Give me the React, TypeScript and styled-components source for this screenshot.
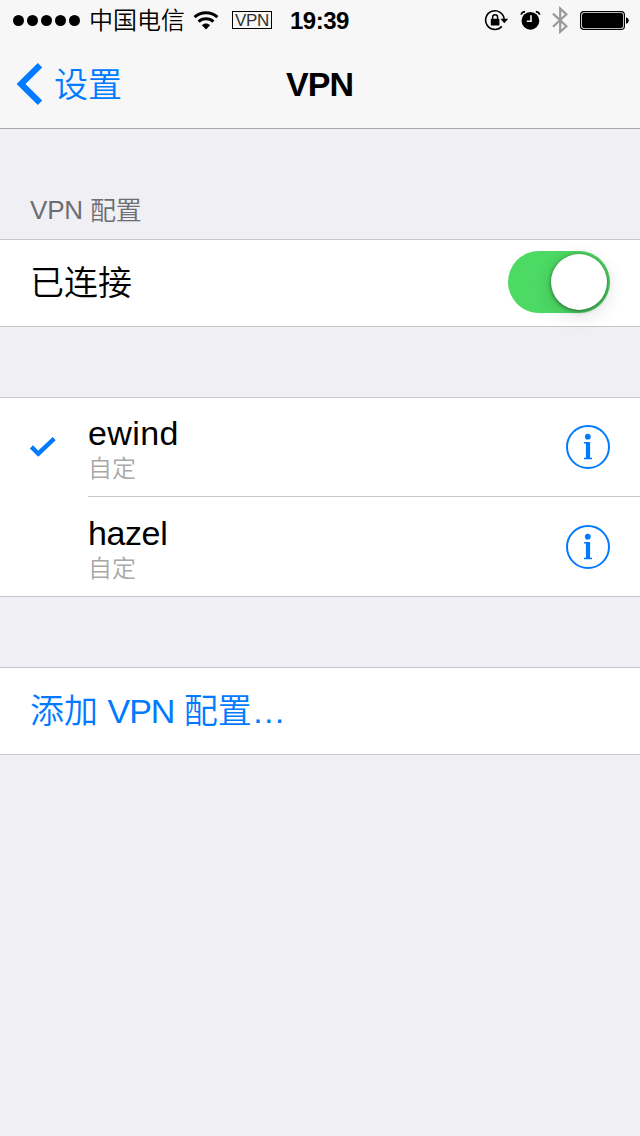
import React from "react";
import styled, { createGlobalStyle } from "styled-components";

const BLUE = "#007aff";
const HAIRLINE = "#c8c7cc";

const GlobalStyle = createGlobalStyle`
  * { box-sizing: border-box; }
  html, body { margin: 0; padding: 0; background: #efeff4; }
  body {
    font-family: "Liberation Sans", "Noto Sans CJK SC", sans-serif;
    font-weight: 350;
    color: #000;
  }
`;

const Screen = styled.div`
  width: 640px;
  height: 1136px;
  background: #efeff4;
  overflow: hidden;
`;

const Header = styled.header`
  height: 129px;
  background: #f7f7f7;
  border-bottom: 1px solid #a7a7aa;
`;

const StatusBar = styled.div`
  display: flex;
  align-items: center;
  height: 40px;
  padding: 0 10px 0 13px;
`;

const Signal = styled.div`
  display: flex;
  gap: 3px;
  padding-top: 1px;
`;

const SignalDot = styled.span`
  width: 11px;
  height: 11px;
  border-radius: 50%;
  background: #000;
`;

const Carrier = styled.span`
  margin-left: 9px;
  width: 97px;
  padding-top: 2px;
  font-size: 24px;
  line-height: 40px;
  white-space: nowrap;
`;

const VpnBadge = styled.span`
  margin-left: 13px;
  width: 40px;
  height: 18px;
  border: 1px solid #000;
  font-size: 17px;
  line-height: 17px;
  letter-spacing: -0.3px;
  padding-left: 2px;
  color: #333;
`;

const Clock = styled.span`
  margin-left: 18px;
  font-size: 24px;
  font-weight: 700;
  line-height: 40px;
  padding-top: 2px;
  letter-spacing: -0.5px;
`;

const StatusIcons = styled.div`
  display: flex;
  align-items: center;
  margin-left: auto;
  height: 40px;
`;

const NavBar = styled.nav`
  display: grid;
  grid-template-columns: 1fr auto 1fr;
  height: 88px;
  line-height: 88px;
  font-size: 34px;
`;

const BackButton = styled.div`
  display: flex;
  align-items: center;
  padding-left: 15px;
  gap: 10px;
  color: ${BLUE};
`;

const Hanzi = styled.span`
  vertical-align: -1px;
`;

const BackLabel = styled.span`
  padding-top: 2px;
  line-height: 86px;
`;

const NavTitle = styled.h1`
  margin: 0;
  padding-right: 1px;
  font-size: 34px;
  font-weight: 700;
  letter-spacing: -0.9px;
`;

const SectionTitle = styled.h2`
  margin: 0;
  height: 110px;
  padding: 61px 30px 0;
  font-size: 26px;
  font-weight: 350;
  line-height: 40px;
  letter-spacing: -0.2px;
  color: #6d6d72;
`;

const Group = styled.section<{ $gap?: number }>`
  margin-top: ${(p) => p.$gap ?? 0}px;
  background: #fff;
  border-top: 1px solid ${HAIRLINE};
  border-bottom: 1px solid ${HAIRLINE};
`;

const Row = styled.div<{ $link?: boolean }>`
  display: flex;
  align-items: center;
  justify-content: space-between;
  height: 86px;
  padding: 0 30px;
  font-size: 34px;
  line-height: 86px;
  color: ${(p) => (p.$link ? BLUE : "#000")};
`;

const TightLatin = styled.span`
  letter-spacing: -1px;
`;

const Switch = styled.div`
  display: flex;
  justify-content: flex-end;
  width: 102px;
  height: 62px;
  margin-top: -2px;
  padding: 3px;
  border-radius: 31px;
  background: #4cd964;
`;

const Knob = styled.span`
  width: 56px;
  height: 56px;
  border-radius: 50%;
  background: #fff;
  box-shadow: 0 1px 4px rgba(0, 0, 0, 0.5), 0 5px 20px rgba(0, 0, 0, 0.14);
`;

const ConfigRow = styled.div`
  display: flex;
  padding-left: 29px;
`;

const CheckSlot = styled.div`
  width: 59px;
  padding-top: 38px;
  line-height: 0;
`;

const ConfigBody = styled.div<{ $divided: boolean }>`
  display: flex;
  flex: 1;
  justify-content: space-between;
  height: 99px;
  padding: ${(p) => (p.$divided ? 16 : 17)}px 30px 0 0;
  border-bottom: ${(p) => (p.$divided ? `1px solid ${HAIRLINE}` : "none")};
`;

const ConfigName = styled.div<{ $tracking: number }>`
  font-size: 34px;
  line-height: 38px;
  letter-spacing: ${(p) => p.$tracking}px;
`;

const ConfigKind = styled.div`
  font-size: 24px;
  line-height: 34px;
  color: #a8a8a8;
`;

const InfoButton = styled.span`
  height: 44px;
  margin-top: 11px;
  line-height: 0;
`;

const InfoIcon = () => (
  <svg width="44" height="44" viewBox="0 0 44 44" fill="none" stroke={BLUE}>
    <circle cx="22" cy="22" r="21" strokeWidth="2" />
    <circle cx="21.8" cy="11.7" r="2.9" fill={BLUE} stroke="none" />
    <path d="M22 17v17" strokeWidth="4.2" />
    <path d="M18 17.8h5M18 33.5h8" strokeWidth="1.4" />
  </svg>
);

const WifiIcon = () => (
  <svg width="26" height="20" viewBox="0 0 26 20" fill="none" stroke="#000" strokeWidth="3">
    <path d="M1.6 7.2C7.8 1.2 18.2 1.2 24.4 7.2" />
    <path d="M5.6 11.7C9.7 7.9 16.3 7.9 20.4 11.7" />
    <path d="M13 19.6 8.9 15.2C11.2 13 14.8 13 17.1 15.2Z" fill="#000" stroke="none" />
  </svg>
);

const RotationLockIcon = () => (
  <svg width="26" height="24" viewBox="0 0 26 24">
    <path d="M18.8 18.4A9.3 9.3 0 1 1 21.2 11.5" fill="none" stroke="#000" strokeWidth="1.6" />
    <path d="M17.4 10.8H25.2L21.3 15.2Z" />
    <rect x="7.8" y="10.8" width="8.6" height="6.6" rx=".6" />
    <path d="M9.6 11.5V9.3a2.5 2.5 0 0 1 5 0v2.2" fill="none" stroke="#000" strokeWidth="1.5" />
  </svg>
);

const AlarmIcon = () => (
  <svg width="22" height="22" viewBox="0 0 22 22">
    <circle cx="11.4" cy="11.8" r="8.9" />
    <path d="M2.2 5.8Q2.4 3.2 6 2.6M20.6 5.8Q20.4 3.2 16.8 2.6" fill="none" stroke="#000" strokeWidth="1.6" />
    <path d="M12 6.2v6.1H7.8" fill="none" stroke="#f7f7f7" strokeWidth="1.6" />
  </svg>
);

const BluetoothIcon = () => (
  <svg width="18" height="28" viewBox="0 0 18 28" fill="none" stroke="#999" strokeWidth="2.2">
    <path d="M2 7.6 15.4 20.2 9.2 25.8V2.6L15.4 8.2 2 20.8" />
  </svg>
);

const BatteryIcon = () => (
  <svg width="50" height="20" viewBox="0 0 50 20">
    <rect x=".6" y=".6" width="43.8" height="17.8" rx="3.2" fill="none" stroke="#000" strokeWidth="1.2" />
    <rect x="2" y="2" width="41" height="15" rx="2" />
    <path d="M46 6.2q2.8.8 2.8 3.3T46 12.8Z" />
  </svg>
);

const BackChevron = () => (
  <svg width="29" height="44" viewBox="0 0 29 44" fill="none" stroke={BLUE} strokeWidth="6.2">
    <path d="M25 3.2 6 22 25 40.8" />
  </svg>
);

const CheckIcon = () => (
  <svg width="28" height="22" viewBox="0 0 28 22" fill="none" stroke={BLUE} strokeWidth="4.4">
    <path d="M2.4 10.9 9.3 17.7 25.2 2.6" />
  </svg>
);

const IconSlot = styled.span<{ $left?: number; $top?: number }>`
  display: flex;
  margin-left: ${(p) => p.$left ?? 0}px;
  padding-top: ${(p) => p.$top ?? 0}px;
`;

const configs = [
  { name: "ewind", kind: "自定", selected: true, tracking: 0.4 },
  { name: "hazel", kind: "自定", selected: false, tracking: -0.4 },
];

export default function App() {
  return (
    <>
      <GlobalStyle />
      <Screen lang="zh-CN">
        <Header>
          <StatusBar>
            <Signal>
              {[0, 1, 2, 3, 4].map((dot) => (
                <SignalDot key={dot} />
              ))}
            </Signal>
            <Carrier>中国电信</Carrier>
            <IconSlot $left={7}>
              <WifiIcon />
            </IconSlot>
            <VpnBadge>VPN</VpnBadge>
            <Clock>19:39</Clock>
            <StatusIcons>
              <IconSlot>
                <RotationLockIcon />
              </IconSlot>
              <IconSlot $left={10}>
                <AlarmIcon />
              </IconSlot>
              <IconSlot $left={10}>
                <BluetoothIcon />
              </IconSlot>
              <IconSlot $left={11} $top={2}>
                <BatteryIcon />
              </IconSlot>
            </StatusIcons>
          </StatusBar>
          <NavBar>
            <BackButton>
              <BackChevron />
              <BackLabel>设置</BackLabel>
            </BackButton>
            <NavTitle>VPN</NavTitle>
          </NavBar>
        </Header>
        <SectionTitle>
          VPN <Hanzi>配置</Hanzi>
        </SectionTitle>
        <Group>
          <Row>
            已连接
            <Switch>
              <Knob />
            </Switch>
          </Row>
        </Group>
        <Group $gap={70}>
          {configs.map((config, index) => (
            <ConfigRow key={config.name}>
              <CheckSlot>{config.selected && <CheckIcon />}</CheckSlot>
              <ConfigBody $divided={index < configs.length - 1}>
                <div>
                  <ConfigName $tracking={config.tracking}>{config.name}</ConfigName>
                  <ConfigKind>{config.kind}</ConfigKind>
                </div>
                <InfoButton>
                  <InfoIcon />
                </InfoButton>
              </ConfigBody>
            </ConfigRow>
          ))}
        </Group>
        <Group $gap={70}>
          <Row $link>
            <span>
              添加 <TightLatin>VPN</TightLatin> 配置…
            </span>
          </Row>
        </Group>
      </Screen>
    </>
  );
}
